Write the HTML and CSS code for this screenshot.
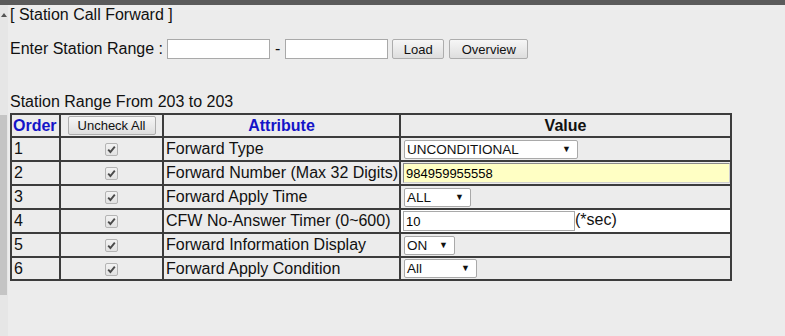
FILE: index.html
```html
<!DOCTYPE html>
<html>
<head>
<meta charset="utf-8">
<link rel="stylesheet" href="styles.css">
</head>
<body>
<div class="topbar"></div>
<div class="page">
  <div class="side"><span class="arrow"></span><span class="thumb"></span></div>
  <div class="content">
    <div class="title">[ Station Call Forward ]</div>
    <div class="range">
      <span class="label">Enter Station Range :</span>
      <input class="rinput" type="text">
      <span class="dash">-</span>
      <input class="rinput" type="text">
      <button class="btn load">Load</button>
      <button class="btn overview">Overview</button>
    </div>
    <div class="caption">Station Range From 203 to 203</div>
    <table class="grid">
      <colgroup>
        <col class="c1"><col class="c2"><col class="c3"><col class="c4">
      </colgroup>
      <tr class="head">
        <th class="blue left">Order</th>
        <th><button class="btn uncheck">Uncheck All</button></th>
        <th class="blue">Attribute</th>
        <th>Value</th>
      </tr>
      <tr>
        <td>1</td>
        <td class="cb"><span class="chk"><svg viewBox="0 0 13 13" width="13" height="13"><path d="M3.2 6.6 L5.4 9 L9.8 3.6" fill="none" stroke="#4a4a4a" stroke-width="1.9"/></svg></span></td>
        <td>Forward Type</td>
        <td><span class="sel w174">UNCONDITIONAL</span></td>
      </tr>
      <tr>
        <td>2</td>
        <td class="cb"><span class="chk"><svg viewBox="0 0 13 13" width="13" height="13"><path d="M3.2 6.6 L5.4 9 L9.8 3.6" fill="none" stroke="#4a4a4a" stroke-width="1.9"/></svg></span></td>
        <td>Forward Number (Max 32 Digits)</td>
        <td><input class="num" type="text" value="984959955558"></td>
      </tr>
      <tr>
        <td>3</td>
        <td class="cb"><span class="chk"><svg viewBox="0 0 13 13" width="13" height="13"><path d="M3.2 6.6 L5.4 9 L9.8 3.6" fill="none" stroke="#4a4a4a" stroke-width="1.9"/></svg></span></td>
        <td>Forward Apply Time</td>
        <td><span class="sel w67">ALL</span></td>
      </tr>
      <tr>
        <td>4</td>
        <td class="cb"><span class="chk"><svg viewBox="0 0 13 13" width="13" height="13"><path d="M3.2 6.6 L5.4 9 L9.8 3.6" fill="none" stroke="#4a4a4a" stroke-width="1.9"/></svg></span></td>
        <td>CFW No-Answer Timer (0~600)</td>
        <td class="white"><input class="timer" type="text" value="10">(*sec)</td>
      </tr>
      <tr>
        <td>5</td>
        <td class="cb"><span class="chk"><svg viewBox="0 0 13 13" width="13" height="13"><path d="M3.2 6.6 L5.4 9 L9.8 3.6" fill="none" stroke="#4a4a4a" stroke-width="1.9"/></svg></span></td>
        <td>Forward Information Display</td>
        <td><span class="sel w51">ON</span></td>
      </tr>
      <tr class="last">
        <td>6</td>
        <td class="cb"><span class="chk"><svg viewBox="0 0 13 13" width="13" height="13"><path d="M3.2 6.6 L5.4 9 L9.8 3.6" fill="none" stroke="#4a4a4a" stroke-width="1.9"/></svg></span></td>
        <td>Forward Apply Condition</td>
        <td><span class="sel w73">All</span></td>
      </tr>
    </table>
  </div>
</div>
</body>
</html>
```

FILE: styles.css
```css
html, body {
  margin: 0;
  padding: 0;
  background: #ececec;
  font-family: "Liberation Sans", Arial, sans-serif;
  font-size: 16px;
  color: #111;
}
.topbar {
  height: 5px;
  background: #5b5b5b;
}
.page {
  display: flex;
  height: 331px;
}
.side {
  position: relative;
  width: 8px;
  flex: none;
  background: #e6e6e6;
}
.arrow {
  position: absolute;
  left: 1px;
  top: 8px;
  width: 0;
  height: 0;
  border-left: 3px solid transparent;
  border-right: 3px solid transparent;
  border-bottom: 4px solid #555;
}
.thumb {
  position: absolute;
  left: 0;
  top: 110px;
  width: 7px;
  height: 180px;
  background: #c4c4c4;
}
.content {
  padding-left: 2px;
  flex: 1;
}
.title {
  line-height: 18px;
  margin-top: 1px;
}
.range {
  display: flex;
  align-items: center;
  height: 20px;
  margin-top: 15px;
}
.label {
  margin-right: 4px;
}
.rinput {
  width: 103px;
  height: 20px;
  box-sizing: border-box;
  border: 1px solid #a9a9a9;
  background: #fff;
  margin: 0;
  padding: 0 2px;
}
.dash {
  margin: 0 5px 0 5px;
}
.btn {
  font-family: "Liberation Sans", Arial, sans-serif;
  font-size: 13px;
  color: #111;
  height: 20px;
  box-sizing: border-box;
  border: 1px solid #adadad;
  border-radius: 2px;
  background: linear-gradient(#f6f6f6, #dedede);
  padding: 0;
  margin: 0;
}
.load {
  width: 52px;
  margin-left: 4px;
}
.overview {
  width: 79px;
  margin-left: 5px;
}
.caption {
  line-height: 18px;
  margin-top: 34px;
}
.grid {
  border-collapse: collapse;
  width: 720px;
  margin-top: 2px;
  table-layout: fixed;
}
.c1 { width: 49px; }
.c2 { width: 103px; }
.c3 { width: 237px; }
.c4 { width: 331px; }
.grid th, .grid td {
  border: 2px solid #3c3c3c;
  padding: 0 2px;
  height: 22px;
  vertical-align: middle;
  white-space: nowrap;
  line-height: 18px;
}
.grid .head th {
  height: 21px;
  font-weight: bold;
  text-align: center;
}
.grid .head th.left {
  text-align: left;
  padding-left: 1px;
}
.grid .last td {
  height: 21px;
}
.blue {
  color: #1414c8;
}
.uncheck {
  width: 88px;
  height: 19px;
  vertical-align: middle;
}
.cb {
  text-align: center;
  line-height: 0;
}
.chk {
  display: inline-block;
  width: 13px;
  height: 13px;
  box-sizing: border-box;
  border: 1px solid #b4b4b4;
  border-radius: 2px;
  background: linear-gradient(#f2f2f2, #e2e2e2);
  vertical-align: middle;
  position: relative;
}
.chk svg {
  position: absolute;
  left: -1px;
  top: -1px;
}
.sel {
  position: relative;
  display: inline-block;
  vertical-align: middle;
  height: 19px;
  box-sizing: border-box;
  border: 1px solid #a9a9a9;
  border-radius: 2px;
  background: #fff;
  font-size: 13.5px;
  line-height: 17px;
  padding-left: 2px;
  margin-left: 1px;
}
.sel::after {
  content: "▼";
  position: absolute;
  right: 6px;
  top: 0;
  font-size: 9px;
  line-height: 17px;
  color: #111;
}
.w174 { width: 174px; }
.w67 { width: 67px; }
.w51 { width: 51px; }
.w73 { width: 73px; }
.num {
  width: 327px;
  height: 20px;
  box-sizing: border-box;
  border: 1px solid;
  border-color: #8a8a8a #d0d0d0 #d0d0d0 #8a8a8a;
  background: #ffffc4;
  font-family: "Liberation Sans", Arial, sans-serif;
  font-size: 13px;
  padding: 0 2px;
  margin: 0;
  vertical-align: middle;
}
.white {
  background: #fff;
}
.timer {
  width: 172px;
  height: 20px;
  box-sizing: border-box;
  border: 1px solid #a9a9a9;
  background: #fff;
  font-family: "Liberation Sans", Arial, sans-serif;
  font-size: 13px;
  padding: 0 2px;
  margin: 0;
  vertical-align: middle;
}
```
